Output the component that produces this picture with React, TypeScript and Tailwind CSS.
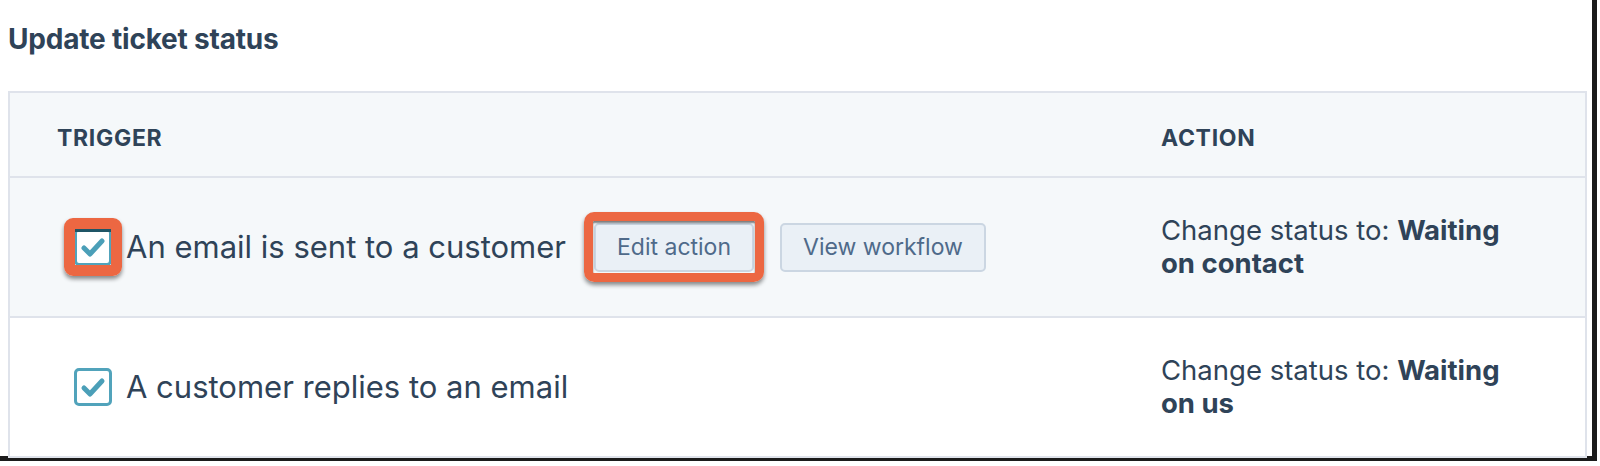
import React from 'react';

const Check: React.FC<{ highlighted?: boolean }> = ({ highlighted }) => (
  <div className="relative w-[38px] h-[38px] shrink-0">
    <div className="w-full h-full rounded-[5px] border-[3px] border-[#51a3bb] bg-white flex items-center justify-center">
      <svg width="26" height="22" viewBox="0 0 26 22" fill="none">
        <path d="M4 12 L10 18 L22 5" stroke="#4b9fb8" strokeWidth="5" strokeLinecap="round" strokeLinejoin="round" />
      </svg>
    </div>
    {highlighted && (
      <div className="absolute -inset-[10px] rounded-[9px] border-[11px] border-[#ec6742] shadow-[0_3px_4px_rgba(0,0,0,0.45),inset_0_3px_0_#1f5566]" />
    )}
  </div>
);

const Button: React.FC<{ label: string; highlighted?: boolean }> = ({ label, highlighted }) => (
  <div className="relative shrink-0">
    <button className="h-[49px] px-[21px] rounded-[5px] border-2 border-[#cbd6e2] bg-[#eaf0f6] text-[#4f6a8a] text-[23px]">
      {label}
    </button>
    {highlighted && (
      <div className="absolute -left-[10px] -right-[10px] -top-[11px] -bottom-[10px] rounded-[10px] border-[9px] border-[#ec6742] shadow-[0_3px_4px_rgba(0,0,0,0.45),inset_0_2px_2px_rgba(0,0,0,0.5)]" />
    )}
  </div>
);

const ActionText: React.FC<{ status: string }> = ({ status }) => (
  <p className="w-[345px] text-[27.5px] leading-[33px]">
    Change status to: <span className="font-bold">{status}</span>
  </p>
);

export default function App() {
  return (
    <div className="w-[1600px] h-[466px] bg-white text-[#2f4358] font-['Inter','Noto_Sans',sans-serif]">
      <div className="w-[1597px] h-[461px] border-r-[5px] border-b-[5px] border-[#1b1b1b] pl-2 pr-[5px]">
        <h2 className="h-[91px] pt-[18px] text-[28px] font-bold tracking-[-0.2px]">Update ticket status</h2>

        <div className="border-2 border-[#dfe3eb]">
          {/* header */}
          <div className="grid grid-cols-[1102px_1fr] h-[85px] bg-[#f5f8fa] border-b-2 border-[#dfe3eb]">
            <div className="flex items-center pt-[8px] pl-[47px] text-[23px] font-bold tracking-[0.7px]">TRIGGER</div>
            <div className="flex items-center pt-[8px] pl-[49px] text-[23px] font-bold tracking-[0.7px]">ACTION</div>
          </div>

          {/* row 1 */}
          <div className="grid grid-cols-[1102px_1fr] h-[140px] bg-[#f5f8fa] border-b-2 border-[#dfe3eb]">
            <div className="flex items-center pl-[64px]">
              <Check highlighted />
              <span className="ml-[14px] text-[31px]">An email is sent to a customer</span>
              <div className="ml-[28px] flex items-center gap-[26px]">
                <Button label="Edit action" highlighted />
                <Button label="View workflow" />
              </div>
            </div>
            <div className="flex items-center pl-[49px]">
              <ActionText status="Waiting on contact" />
            </div>
          </div>

          {/* row 2 */}
          <div className="grid grid-cols-[1102px_1fr] h-[138px] bg-white">
            <div className="flex items-center pl-[64px]">
              <Check />
              <span className="ml-[14px] text-[31px]">A customer replies to an email</span>
            </div>
            <div className="flex items-center pl-[49px]">
              <ActionText status="Waiting on us" />
            </div>
          </div>
        </div>
      </div>
    </div>
  );
}
